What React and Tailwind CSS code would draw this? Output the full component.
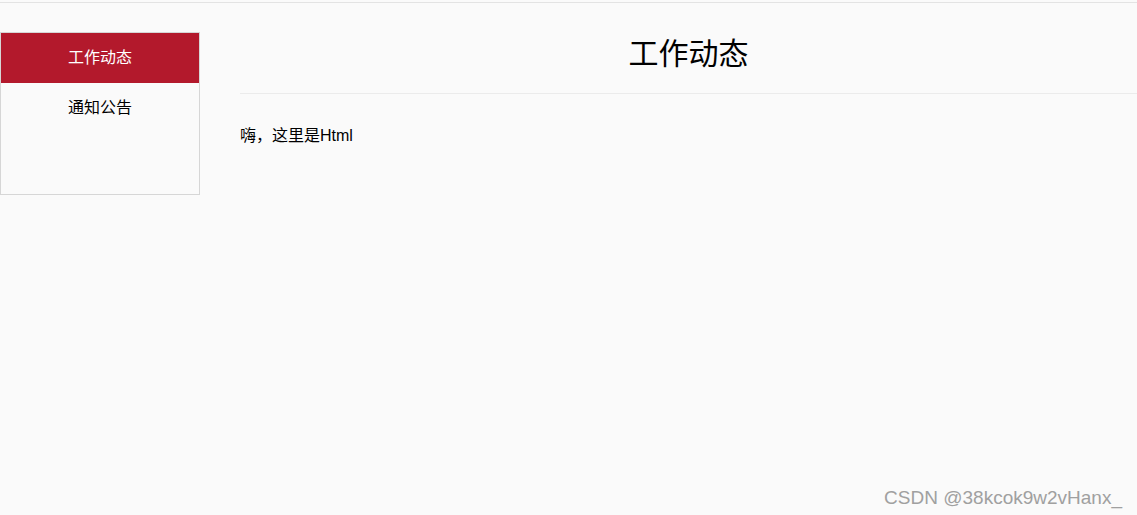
export default function App() {
  const font = { fontFamily: '"Liberation Sans", "Noto Sans CJK SC", sans-serif' };
  return (
    <div className="relative w-[1137px] h-[515px] bg-[#fafafa] overflow-hidden" style={font}>
      <div className="h-[2px]" />
      <div className="h-[1px] bg-[#e3e3e3]" />
      <div className="flex pt-[29px]">
        <div className="w-[200px] h-[163px] border border-[#d6d6d6] flex flex-col shrink-0">
          <div className="h-[50px] bg-[#b3192c] text-white text-[16px] flex items-center justify-center">
            工作动态
          </div>
          <div className="h-[50px] text-black text-[16px] flex items-center justify-center">
            通知公告
          </div>
        </div>
        <div className="flex-1 ml-[40px]">
          <div className="border-b border-[#ebebeb] h-[62px] pt-[1px]">
            <div className="text-center text-[30px] leading-[42px] text-black">工作动态</div>
          </div>
          <p className="mt-[31px] text-[16px] leading-[22px] text-black">嗨，这里是Html</p>
        </div>
      </div>
      <div className="absolute right-[15px] bottom-[5px] text-[19px] text-[#a0a0a0] leading-[24px]">
        CSDN @38kcok9w2vHanx_
      </div>
    </div>
  );
}
